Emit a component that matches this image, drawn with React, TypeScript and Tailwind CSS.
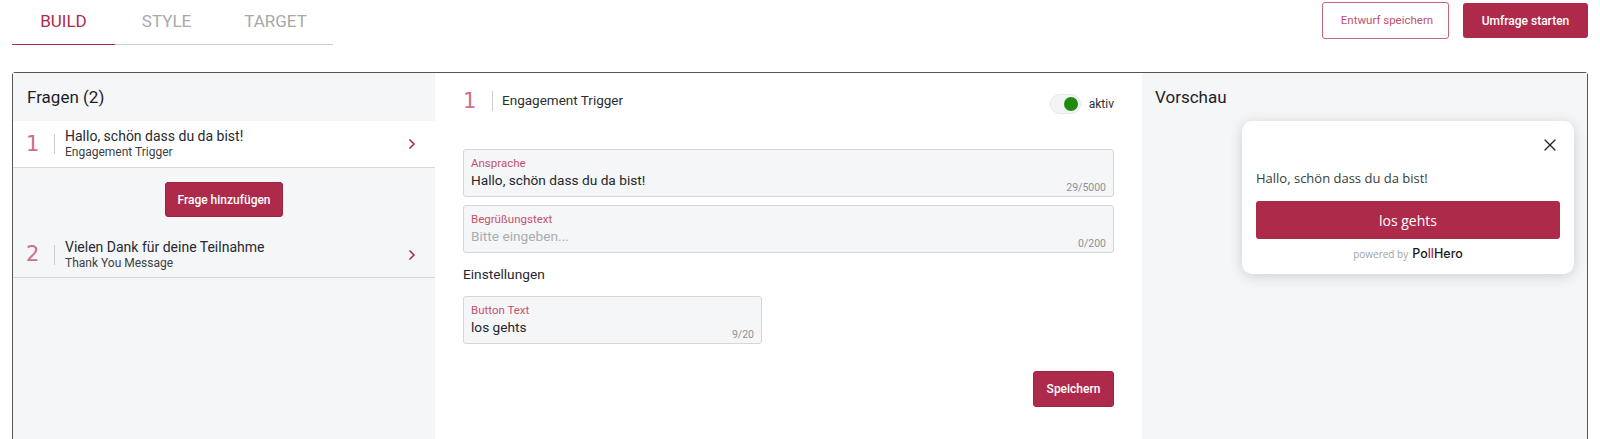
import { ChevronRight, X } from 'lucide-react'

const FONT = "font-['Roboto','Noto_Sans',sans-serif]"

const questions = [
  { nr: 1, title: 'Hallo, schön dass du da bist!', type: 'Engagement Trigger' },
  { nr: 2, title: 'Vielen Dank für deine Teilnahme', type: 'Thank You Message' },
]

function QuestionRow({ nr, title, type, active }: { nr: number; title: string; type: string; active?: boolean }) {
  return (
    <div className={`flex items-center border-b border-[#d5d8dc] pl-[13px] pr-[15px] ${active ? 'h-[47px] bg-white' : 'h-[46px]'}`}>
      <span className="w-[28px] font-['DejaVu_Sans',sans-serif] text-[21px] leading-none text-[#cd6f85]">{nr}</span>
      <span className="h-5 w-px bg-[#c9ccd1]" />
      <div className="ml-[10px] flex-1">
        <div className="text-[14px] leading-[17px] text-[#262a30]">{title}</div>
        <div className="text-[12px] leading-[15px] text-[#3b3f45]">{type}</div>
      </div>
      <ChevronRight className="h-4 w-4 text-[#ae2a4a]" strokeWidth={2.5} />
    </div>
  )
}

function Field({ label, value, counter, placeholder }: { label: string; value: string; counter: string; placeholder?: boolean }) {
  return (
    <div className="relative h-[48px] rounded-[3px] border border-[#d3d6da] bg-[#f5f6f8] px-[7px] pt-[6px]">
      <div className="text-[11.5px] leading-[14px] text-[#c4516d]">{label}</div>
      <div className={`text-[13.7px] leading-[20px] ${placeholder ? 'text-[#a9acb1]' : 'text-[#23272c]'}`}>{value}</div>
      <span className="absolute bottom-[2px] right-[7px] text-[10.5px] leading-[13px] text-[#8e9196]">{counter}</span>
    </div>
  )
}

export default function App() {
  return (
    <div className={`h-[439px] overflow-hidden bg-white ${FONT}`}>
      <div className="flex h-[72px] items-start justify-between pl-3 pr-3">
        <div className="flex h-[45px] w-[321px] border-b border-[#cfcfcf] text-[17px] text-[#a8a8a8]">
          <div className="flex h-[45px] w-[103px] justify-center border-b border-[#ae2a4a] pt-[10px] leading-[22px] text-[#ae2a4a]">BUILD</div>
          <div className="flex w-[103px] justify-center pt-[10px] leading-[22px]">STYLE</div>
          <div className="flex w-[115px] justify-center pt-[10px] leading-[22px]">TARGET</div>
        </div>
        <div className="flex items-start gap-[14px] pt-[2px]">
          <button className="h-[37px] w-[127px] rounded-[3px] border border-[#c9627b] bg-white pl-[3px] text-[11.5px] text-[#c4516d]">Entwurf speichern</button>
          <button className="mt-px h-[35px] w-[125px] rounded-[3px] bg-[#ae2a4a] text-[12px] font-medium text-white">Umfrage starten</button>
        </div>
      </div>

      <div className="mx-3 flex h-[400px] rounded-t-[3px] border border-[#555]">
        <div className="w-[422px] bg-[#f5f6f8]">
          <div className="flex h-[48px] items-center pl-[14px] pt-[2px] text-[17px] text-[#1e2227]">Fragen (2)</div>
          <QuestionRow {...questions[0]} active />
          <div className="flex justify-center pb-[15px] pt-[14px]">
            <button className="h-[35px] w-[118px] rounded-[3px] border border-[#9c2341] bg-[#ae2a4a] text-[12px] font-medium text-white">Frage hinzufügen</button>
          </div>
          <QuestionRow {...questions[1]} />
        </div>

        <div className="flex w-[707px] flex-col bg-white pl-[28px] pr-[28px]">
          <div className="flex h-[76px] items-start justify-between pt-[18px]">
            <div className="flex h-5 items-center">
              <span className="w-[29px] font-['DejaVu_Sans',sans-serif] text-[21px] leading-none text-[#cd6f85]">1</span>
              <span className="h-5 w-px bg-[#c9ccd1]" />
              <span className="ml-[9px] pb-[2px] text-[13.5px] text-[#2a2e33]">Engagement Trigger</span>
            </div>
            <div className="mt-[3px] flex items-center gap-2">
              <div className="flex h-5 w-[31px] items-center justify-end rounded-full border border-[#e6e7e9] bg-[#f3f4f5] pr-[2px]">
                <span className="h-[14px] w-[14px] rounded-full bg-[#1f8a0c]" />
              </div>
              <span className="text-[12px] text-[#2a2e33]">aktiv</span>
            </div>
          </div>
          <div className="flex flex-col gap-2">
            <Field label="Ansprache" value="Hallo, schön dass du da bist!" counter="29/5000" />
            <Field label="Begrüßungstext" value="Bitte eingeben..." counter="0/200" placeholder />
          </div>
          <div className="mt-[12px] text-[13.7px] leading-[18px] text-[#23272c]">Einstellungen</div>
          <div className="mt-[13px] w-[299px]">
            <Field label="Button Text" value="los gehts" counter="9/20" />
          </div>
          <div className="mt-[27px] flex justify-end">
            <button className="h-[36px] w-[81px] rounded-[3px] border border-[#9c2341] bg-[#ae2a4a] text-[12px] font-medium text-white">Speichern</button>
          </div>
        </div>

        <div className="flex-1 bg-[#f5f6f8] pl-[13px]">
          <div className="flex h-[48px] items-center pt-[2px] text-[17px] text-[#1e2227]">Vorschau</div>
          <div className="ml-[87px] h-[153px] w-[332px] rounded-[10px] bg-white px-[14px] pt-[14px] font-['Open_Sans',sans-serif] shadow-[0_2px_14px_rgba(0,0,0,0.16)]">
            <div className="flex justify-end">
              <X className="h-5 w-5 text-[#222]" strokeWidth={1.5} />
            </div>
            <div className="mt-[14px] text-[13px] leading-[18px] text-[#3a3a3a]">Hallo, schön dass du da bist!</div>
            <button className="mt-[14px] h-[38px] w-full rounded-[3px] bg-[#ae2a4a] text-[14px] text-white">los gehts</button>
            <div className="mt-[8px] flex items-center justify-center gap-1 text-[10px] leading-[14px] text-[#a3a3a3]">
              powered by
              <span className="font-['Inter',sans-serif] text-[12.5px] font-medium text-[#1b1b1b]">
                Po<span className="text-[#ae2a4a]">ll</span>Hero
              </span>
            </div>
          </div>
        </div>
      </div>
    </div>
  )
}
